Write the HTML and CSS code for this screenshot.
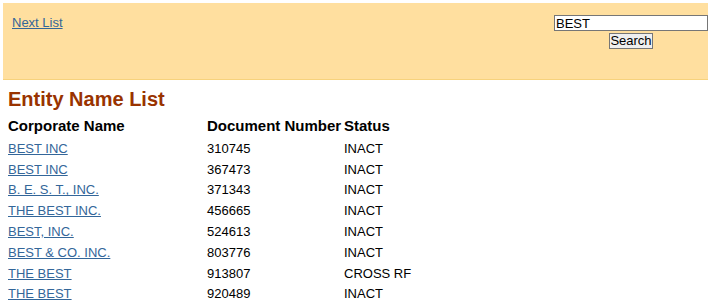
FILE: index.html
```html
<!DOCTYPE html>
<html lang="en">
<head>
  <meta charset="UTF-8">
  <title>Entity Name List</title>
  <link rel="stylesheet" href="styles.css">
</head>
<body>

<div class="top-bar">
  <a href="#" class="next-link">Next List</a>
  <form class="search-form" onsubmit="return false;">
    <input type="text" class="search-input" value="BEST">
    <button type="submit" class="search-btn">Search</button>
  </form>
</div>

<div class="content">
  <h1>Entity Name List</h1>
  <table class="entity-table">
    <thead>
      <tr>
        <th class="col-name">Corporate Name</th>
        <th class="col-doc">Document Number</th>
        <th class="col-status">Status</th>
      </tr>
    </thead>
    <tbody>
      <tr><td><a href="#">BEST INC</a></td><td>310745</td><td>INACT</td></tr>
      <tr><td><a href="#">BEST INC</a></td><td>367473</td><td>INACT</td></tr>
      <tr><td><a href="#">B. E. S. T., INC.</a></td><td>371343</td><td>INACT</td></tr>
      <tr><td><a href="#">THE BEST INC.</a></td><td>456665</td><td>INACT</td></tr>
      <tr><td><a href="#">BEST, INC.</a></td><td>524613</td><td>INACT</td></tr>
      <tr><td><a href="#">BEST &amp; CO. INC.</a></td><td>803776</td><td>INACT</td></tr>
      <tr><td><a href="#">THE BEST</a></td><td>913807</td><td>CROSS RF</td></tr>
      <tr><td><a href="#">THE BEST</a></td><td>920489</td><td>INACT</td></tr>
    </tbody>
  </table>
</div>

</body>
</html>
```

FILE: styles.css
```css
* {
  box-sizing: border-box;
}
body {
  margin: 3px;
  font-family: "Liberation Sans", Arial, sans-serif;
  font-size: 13px;
  color: #000;
  background: #fff;
}
a {
  color: #336699;
}
.top-bar {
  background: #ffdf9f;
  border-bottom: 1px solid #f7d27c;
  height: 77px;
  display: flex;
  justify-content: space-between;
  align-items: flex-start;
  padding: 12px 0 0 9px;
}
.next-link {
  font-size: 13px;
  line-height: 15px;
}
.search-form {
  display: flex;
  flex-direction: column;
  align-items: center;
  margin: 0;
}
.search-input {
  width: 154px;
  height: 16px;
  margin: 0;
  padding: 0 1px;
  border: 1px solid #767676;
  font-family: "Liberation Sans", Arial, sans-serif;
  font-size: 13px;
  line-height: 14px;
  color: #000;
  background: #fff;
}
.search-btn {
  margin-top: 2px;
  height: 16px;
  padding: 0;
  border: 1px solid #767676;
  background: #efefef;
  font-family: "Liberation Sans", Arial, sans-serif;
  font-size: 13px;
  line-height: 14px;
  color: #000;
}
.content {
  padding: 0 0 0 5px;
}
h1 {
  margin: 8px 0 6px;
  font-size: 20px;
  line-height: 22px;
  color: #993300;
}
.entity-table {
  border-collapse: collapse;
}
.entity-table th {
  text-align: left;
  font-size: 15px;
  line-height: 18px;
  padding: 1px 2px 3px 0;
}
.entity-table td {
  padding: 0;
  height: 20.8px;
  line-height: 15px;
  vertical-align: middle;
}
.col-name {
  width: 199px;
}
.col-doc {
  width: 137px;
}
```
